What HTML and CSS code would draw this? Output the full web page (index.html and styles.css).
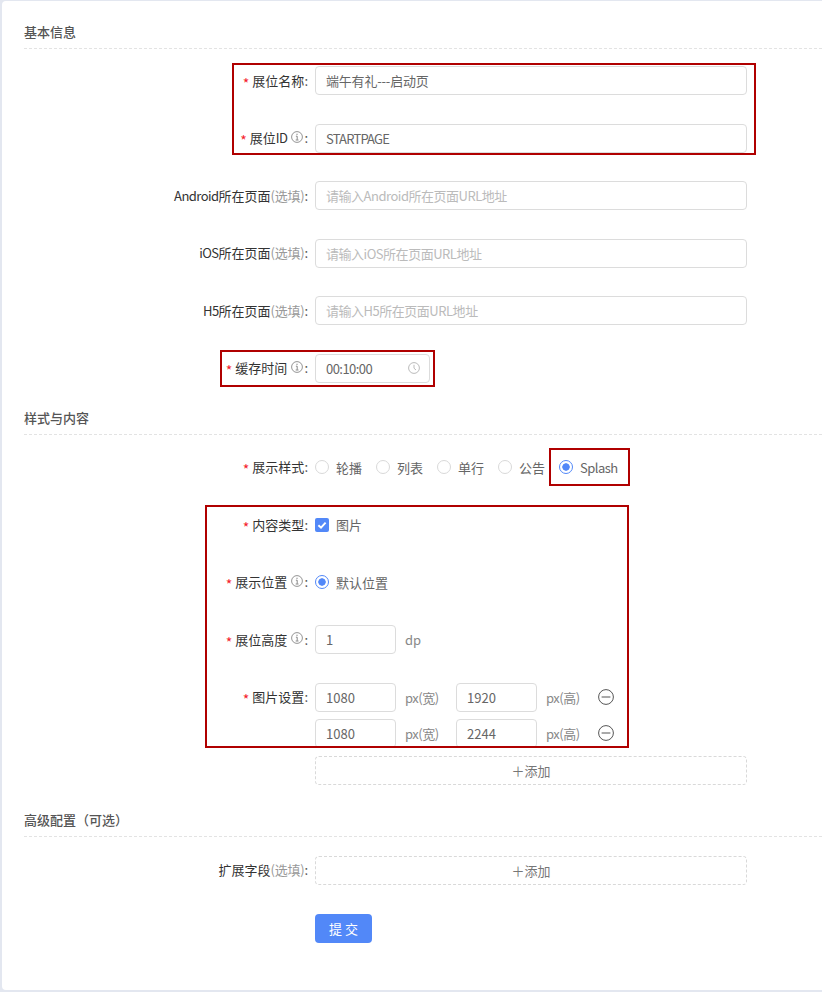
FILE: index.html
```html
<!DOCTYPE html>
<html lang="zh-CN">
<head>
<meta charset="utf-8">
<title>展位配置</title>
<link rel="stylesheet" href="styles.css">
</head>
<body>
<svg class="defs" width="0" height="0" aria-hidden="true">
  <symbol id="info" viewBox="0 0 12 12">
    <circle cx="6" cy="6" r="5.4" fill="none" stroke="currentColor" stroke-width="0.9"/>
    <path d="M6 2.7v1.3M4.9 5.2H6.2V8.8M4.7 9H7.5" fill="none" stroke="currentColor" stroke-width="1"/>
  </symbol>
  <symbol id="minus" viewBox="0 0 16 16">
    <circle cx="8" cy="8" r="7.4" fill="none" stroke="currentColor" stroke-width="1"/>
    <path d="M3.6 8h8.8" fill="none" stroke="currentColor" stroke-width="1"/>
  </symbol>
</svg>
<main class="card">
  <h2 class="section-title">基本信息</h2>
  <div class="row">
    <label class="label"><span class="star">*</span>展位名称<span class="colon">:</span></label>
    <input class="input input-name" value="端午有礼---启动页">
  </div>
  <div class="row">
    <label class="label"><span class="star">*</span>展位<span class="tight">ID</span><svg class="info"><use href="#info"/></svg><span class="colon">:</span></label>
    <input class="input input-latin" value="STARTPAGE">
  </div>
  <div class="row">
    <label class="label"><span class="tight">Android</span>所在页面<span class="optional">(选填)</span><span class="colon">:</span></label>
    <input class="input" placeholder="请输入Android所在页面URL地址">
  </div>
  <div class="row">
    <label class="label"><span class="tight">iOS</span>所在页面<span class="optional">(选填)</span><span class="colon">:</span></label>
    <input class="input" placeholder="请输入iOS所在页面URL地址">
  </div>
  <div class="row">
    <label class="label"><span class="tight">H5</span>所在页面<span class="optional">(选填)</span><span class="colon">:</span></label>
    <input class="input" placeholder="请输入H5所在页面URL地址">
  </div>
  <div class="row row-before-title">
    <label class="label"><span class="star">*</span>缓存时间<svg class="info"><use href="#info"/></svg><span class="colon">:</span></label>
    <div class="time-box">
      <span class="tight">00:10:00</span>
      <svg class="clock" viewBox="0 0 12 12"><circle cx="6" cy="6" r="5.4" fill="none" stroke="currentColor"/><path d="M6 2.8V6.2L8 8" fill="none" stroke="currentColor"/></svg>
    </div>
  </div>

  <h2 class="section-title title-style">样式与内容</h2>
  <div class="row">
    <label class="label"><span class="star">*</span>展示样式<span class="colon">:</span></label>
    <div class="options">
      <span class="option"><i class="radio"></i>轮播</span>
      <span class="option"><i class="radio"></i>列表</span>
      <span class="option"><i class="radio"></i>单行</span>
      <span class="option"><i class="radio"></i>公告</span>
      <span class="option"><i class="radio radio-on"></i><span class="tight">Splash</span></span>
    </div>
  </div>
  <div class="row">
    <label class="label"><span class="star">*</span>内容类型<span class="colon">:</span></label>
    <div class="options">
      <span class="option"><i class="check"><svg viewBox="0 0 14 14"><path d="M3.4 7.2 6 9.6 10.6 4.6" fill="none" stroke="#fff" stroke-width="1.9"/></svg></i>图片</span>
    </div>
  </div>
  <div class="row">
    <label class="label"><span class="star">*</span>展示位置<svg class="info"><use href="#info"/></svg><span class="colon">:</span></label>
    <div class="options">
      <span class="option"><i class="radio radio-on"></i>默认位置</span>
    </div>
  </div>
  <div class="row">
    <label class="label"><span class="star">*</span>展位高度<svg class="info"><use href="#info"/></svg><span class="colon">:</span></label>
    <div class="inline">
      <input class="input input-small" value="1">
      <span class="unit">dp</span>
    </div>
  </div>
  <div class="row row-size">
    <label class="label"><span class="star">*</span>图片设置<span class="colon">:</span></label>
    <div class="inline">
      <input class="input input-small" value="1080">
      <span class="unit unit-wide">px(宽)</span>
      <input class="input input-small" value="1920">
      <span class="unit unit-wide">px(高)</span>
      <svg class="minus"><use href="#minus"/></svg>
    </div>
  </div>
  <div class="row row-size-last">
    <span class="label"></span>
    <div class="inline">
      <input class="input input-small" value="1080">
      <span class="unit unit-wide">px(宽)</span>
      <input class="input input-small" value="2244">
      <span class="unit unit-wide">px(高)</span>
      <svg class="minus"><use href="#minus"/></svg>
    </div>
  </div>
  <div class="row row-add">
    <span class="label"></span>
    <button class="add" type="button">＋添加</button>
  </div>

  <h2 class="section-title title-advanced">高级配置（可选）</h2>
  <div class="row row-ext">
    <label class="label">扩展字段<span class="optional">(选填)</span><span class="colon">:</span></label>
    <button class="add" type="button">＋添加</button>
  </div>
  <div class="row">
    <span class="label"></span>
    <div class="inline"><button class="submit" type="button">提 交</button></div>
  </div>
</main>
<div class="mark mark-basic"></div>
<div class="mark mark-cache"></div>
<div class="mark mark-splash"></div>
<div class="mark mark-content"></div>
</body>
</html>
```
FILE: styles.css
```css
* { box-sizing: border-box; }
html, body { margin: 0; height: 992px; overflow: hidden; }
body {
  position: relative;
  background: #e3e7f0;
  font-family: "Noto Sans CJK SC", "Noto Sans", sans-serif;
  font-size: 13px;
  color: #333;
}
.defs { position: absolute; }
.card {
  margin: 1px 0 0 2px;
  height: 989px;
  padding: 21.1px 0 0 22px;
  background: #fff;
  border-radius: 4px 0 0 4px;
}
.section-title {
  margin: 0 0 17px;
  height: 27px;
  line-height: 19px;
  font-size: 13px;
  font-weight: 500;
  color: #555;
  border-bottom: 1px dashed #e3e3e3;
}
.title-style { margin-bottom: 17.8px; }
.title-advanced { margin-bottom: 19px; }
.row {
  display: grid;
  grid-template-columns: 284px 432px;
  column-gap: 7px;
  align-items: center;
  min-height: 29px;
  margin-bottom: 28.5px;
}
.row-before-title { margin-bottom: 25.5px; }
.row-size { margin-bottom: 7px; }
.row-size-last { margin-bottom: 8px; }
.row-add { margin-bottom: 25.1px; }
.row-ext { margin-bottom: 29px; }
.label {
  display: flex;
  align-items: center;
  justify-content: flex-end;
  line-height: 20px;
  white-space: nowrap;
}
.tight { letter-spacing: -0.55px; }
.star { color: #f5222d; margin-right: 3px; padding-top: 4px; font-size: 14px; }
.optional { color: #999; letter-spacing: -0.25px; }
.colon { color: #555; }
.info { width: 12px; height: 12px; margin: -3px 1px 0 4px; color: #888; }
.input {
  display: block;
  width: 100%;
  height: 29px;
  padding: 0 10px;
  border: 1px solid #dcdcdc;
  border-radius: 4px;
  background: #fff;
  outline: none;
  font: inherit;
  color: #666;
}
.input-name { letter-spacing: -0.2px; }
.input-latin { letter-spacing: -0.8px; }
.input::placeholder { color: #bbb; opacity: 1; letter-spacing: -0.48px; }
.input-small { width: 81px; }
.time-box {
  display: flex;
  align-items: center;
  justify-content: space-between;
  width: 115px;
  height: 29px;
  padding: 0 9px 0 10px;
  border: 1px solid #dcdcdc;
  border-radius: 4px;
  color: #666;
}
.clock { width: 12px; height: 12px; color: #bbb; }
.options { display: flex; align-items: center; height: 29px; gap: 14px; color: #666; }
.option { display: inline-flex; align-items: center; gap: 7px; }
.radio {
  display: block;
  width: 14px;
  height: 14px;
  border: 1px solid #d9d9d9;
  border-radius: 50%;
  background: #fff;
}
.radio-on {
  border-color: #5288f8;
  background: radial-gradient(circle, #5288f8 0 3.4px, #fff 4px);
}
.check {
  display: block;
  width: 14px;
  height: 14px;
  border-radius: 2px;
  background: #5288f8;
}
.check svg { display: block; width: 14px; height: 14px; }
.inline { display: flex; align-items: center; color: #888; }
.unit { margin-left: 9px; }
.unit-wide { width: 51px; letter-spacing: -0.5px; }
.minus { width: 16px; height: 16px; margin-left: 1px; color: #555; }
.add {
  width: 432px;
  height: 29px;
  padding: 0;
  border: 1px dashed #d9d9d9;
  border-radius: 4px;
  background: #fff;
  font: inherit;
  color: #777;
}
.submit {
  width: 57px;
  height: 29px;
  padding: 0;
  border: 0;
  border-radius: 4px;
  background: #5288f8;
  font: inherit;
  color: #fff;
}
.mark {
  position: absolute;
  border: 2.5px solid #b00000;
  pointer-events: none;
}
.mark-basic { left: 232px; top: 63px; width: 524px; height: 92px; }
.mark-cache { left: 220px; top: 350px; width: 215px; height: 37px; }
.mark-splash { left: 549px; top: 448px; width: 81px; height: 38px; }
.mark-content { left: 205px; top: 505px; width: 424px; height: 243px; }
```
